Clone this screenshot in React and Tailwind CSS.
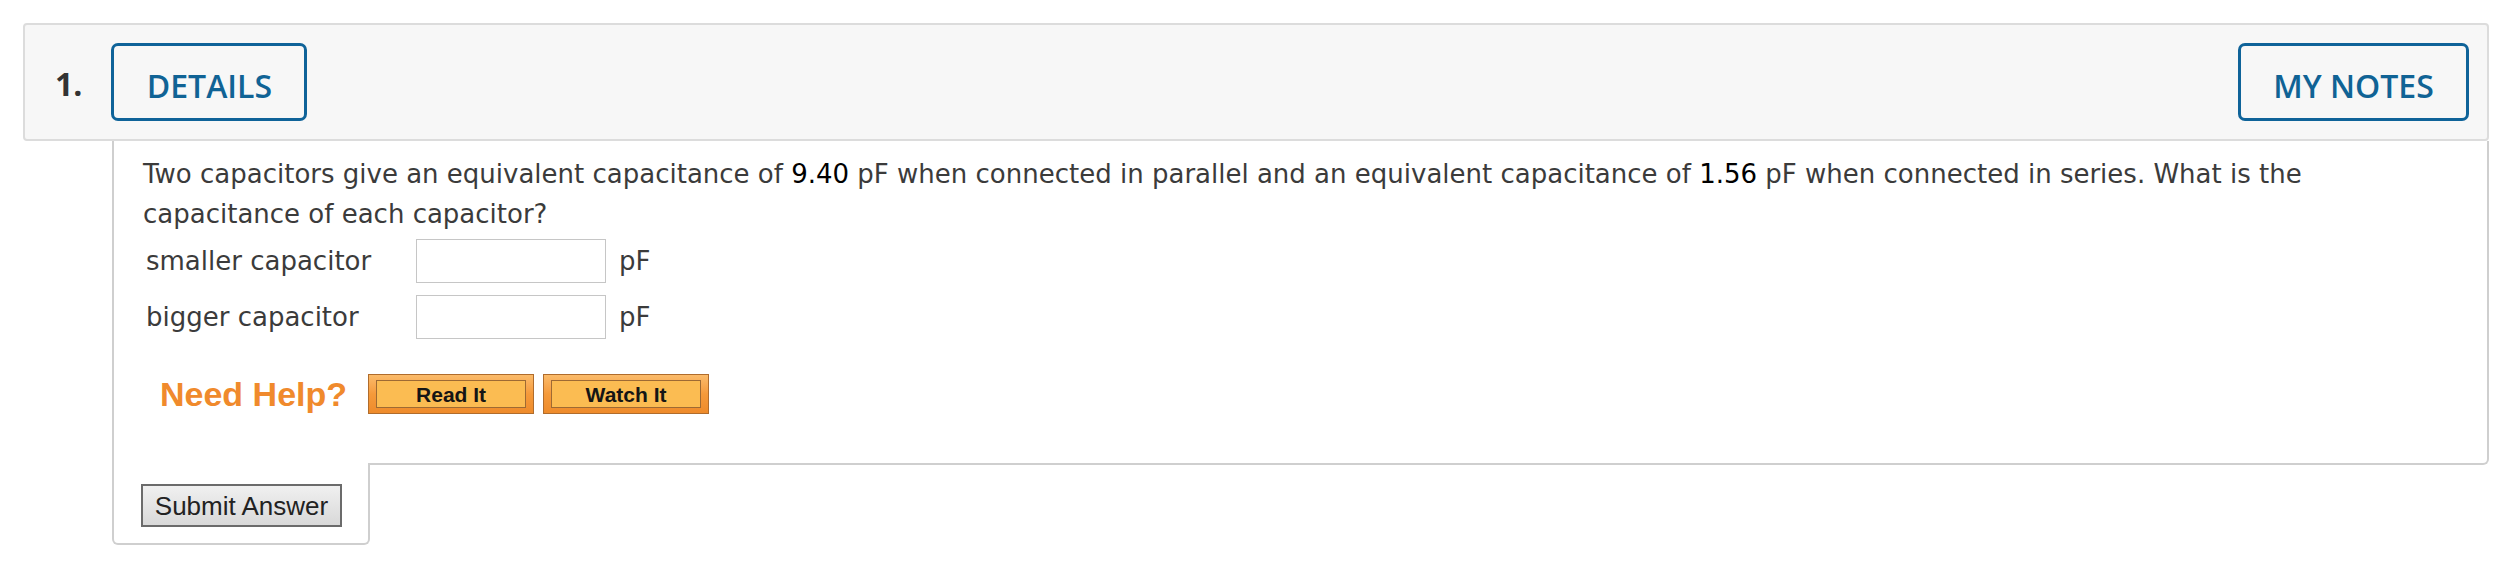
export default function App() {
  const body = "font-['DejaVu_Sans',Verdana,sans-serif]";
  const arial = "font-['Liberation_Sans',Arial,sans-serif]";
  const open = "font-['Open_Sans',sans-serif]";
  return (
    <div className="min-h-[568px] bg-white pl-[23px] pr-[21px] pt-[23px]">
      <header className="flex h-[118px] items-center rounded-[4px] border-2 border-[#dcdcdc] bg-[#f7f7f7] pl-[30px] pr-[18px]">
        <span className={`${open} mt-[4px] text-[32px] font-bold leading-none text-[#333333]`}>1.</span>
        <div className="ml-[29px] flex h-[78px] w-[196px] items-center justify-center rounded-[7px] border-[3px] border-[#0f6399]">
          <span className={`${open} pt-[8px] text-[32px] font-semibold leading-none text-[#106395]`}>DETAILS</span>
        </div>
        <div className="ml-auto flex h-[78px] w-[231px] items-center justify-center rounded-[7px] border-[3px] border-[#0f6399]">
          <span className={`${open} pt-[8px] text-[32px] font-semibold leading-none text-[#106395]`}>MY NOTES</span>
        </div>
      </header>
      <div className="ml-[89px]">
        <div className={`${body} rounded-br-[6px] border-x-2 border-b-2 border-[#cfcfcf] pb-[49px] pl-[29px] pt-[13px] text-[26px] text-[#3b3b3b]`}>
          <p className="whitespace-nowrap leading-[40px]">
            Two capacitors give an equivalent capacitance of <span className="text-black">9.40</span> pF when connected in parallel and an equivalent capacitance of <span className="text-black">1.56</span> pF when connected in series. What is the
            <br />
            capacitance of each capacitor?
          </p>
          <div className="mt-[5px] flex flex-col gap-[12px]">
            <div className="flex h-[44px] items-center">
              <span className="w-[273px] pl-[3px]">smaller capacitor</span>
              <input className="h-[44px] w-[190px] border-[1.5px] border-[#c6c6c6] bg-white outline-none" />
              <span className="ml-[13px]">pF</span>
            </div>
            <div className="flex h-[44px] items-center">
              <span className="w-[273px] pl-[3px]">bigger capacitor</span>
              <input className="h-[44px] w-[190px] border-[1.5px] border-[#c6c6c6] bg-white outline-none" />
              <span className="ml-[13px]">pF</span>
            </div>
          </div>
          <div className="mt-[35px] flex h-[40px] items-center pl-[17px]">
            <span className={`${arial} text-[34px] font-bold leading-none text-[#f08a2c]`}>Need Help?</span>
            <div className="ml-[21px] flex gap-[9px]">
              {["Read It", "Watch It"].map((t) => (
                <div key={t} className="flex h-[40px] w-[166px] items-stretch border-[1.5px] border-[#b06c2c] bg-gradient-to-b from-[#fbbb6a] via-[#f59a3a] to-[#ee8b2b] px-[7px] py-[5px]">
                  <div className={`${arial} flex flex-1 items-center justify-center border border-[#9e6a33] bg-[#fbbc52] text-[21px] font-bold leading-none text-[#151515]`}>
                    {t}
                  </div>
                </div>
              ))}
            </div>
          </div>
        </div>
        <div className="relative -mt-[2px] h-[82px] w-[258px] rounded-b-[6px] border-x-2 border-b-2 border-[#cfcfcf] bg-white pl-[27px] pt-[21px]">
          <button className={`${arial} h-[43px] w-[201px] border-2 border-[#6b6b6b] bg-gradient-to-b from-[#f0f0f0] to-[#d9d9d9] text-[26px] leading-none text-[#222222]`}>
            Submit Answer
          </button>
        </div>
      </div>
    </div>
  );
}
